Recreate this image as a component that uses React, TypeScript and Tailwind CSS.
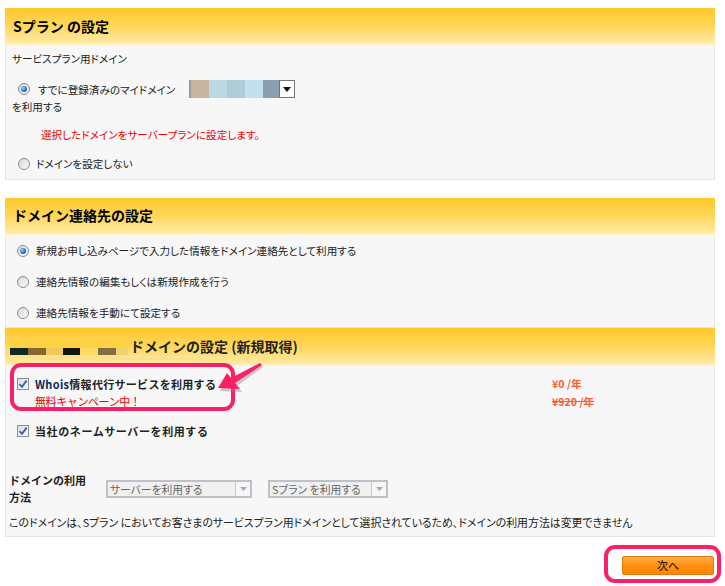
import React from 'react'

const font = '[font-family:"Noto_Sans_CJK_JP","Liberation_Sans",sans-serif]'
const palt = '[font-feature-settings:"palt"]'

function Radio({ checked }: { checked?: boolean }) {
  return (
    <span className="inline-flex items-center justify-center w-[12px] h-[12px] rounded-full border border-[#8c8c8c] bg-gradient-to-br from-[#d8d8d8] to-[#fbfbfb] shrink-0">
      {checked && (
        <span className="block w-[6px] h-[6px] rounded-full bg-[radial-gradient(circle_at_35%_35%,#8fd0ff,#1f6fc4_60%,#0b3f86)]" />
      )}
    </span>
  )
}

function Check() {
  return (
    <span className="inline-flex items-center justify-center w-[12px] h-[12px] border border-[#8f8f99] bg-gradient-to-br from-[#dcdce4] to-[#fafafa] shrink-0">
      <svg width="10" height="10" viewBox="0 0 10 10">
        <path d="M1.5 5.2 L4 7.8 L8.6 1.6" fill="none" stroke="#3a5fa8" strokeWidth="1.8" />
      </svg>
    </span>
  )
}

function Header({ children }: { children: React.ReactNode }) {
  return (
    <div className="h-[37px] flex items-center pl-2 bg-gradient-to-b from-[#ffc928] via-[#ffd656] to-[#ffe9a4] border-b-2 border-[#fff1c6]">
      <span className="text-[14px] font-bold text-black leading-none">{children}</span>
    </div>
  )
}

function Body({ children, className = '' }: { children: React.ReactNode; className?: string }) {
  return (
    <div className={'bg-[#f7f7f7] border border-t-0 border-[#e4e4e4] ' + className}>{children}</div>
  )
}

function DisabledSelect({ label, width }: { label: string; width: string }) {
  return (
    <div className={'h-[18px] flex border-2 border-[#c0c0cc] bg-[#f0f0f0] ' + width}>
      <span className={'flex-1 pl-[2px] text-[10.8px] leading-[14px] text-[#666] ' + palt}>{label}</span>
      <span className="w-[15px] flex items-center justify-center border-l border-[#c8c8d0] bg-[#f6f6f6]">
        <svg width="7" height="4" viewBox="0 0 7 4">
          <path d="M0 0 H7 L3.5 4 Z" fill="#a8a8b0" />
        </svg>
      </span>
    </div>
  )
}

export default function App() {
  return (
    <div className={'relative w-[725px] h-[586px] bg-white text-[#222] ' + font}>
      <div className="ml-[5px] w-[710px] pt-[8px]">
        {/* Sプラン */}
        <Header>Sプラン の設定</Header>
        <Body className={'px-[6px] pt-[6px] pb-[7px] text-[10.6px] ' + palt}>
          <div className="leading-[16px]">サービスプラン用ドメイン</div>
          <div className="mt-[12px] flex items-start">
            <div className="w-[177px] leading-[17px]">
              <span className="inline-flex items-center gap-[8px] pl-[6px]">
                <Radio checked />
                すでに登録済みのマイドメイン
              </span>
              <br />
              を利用する
            </div>
            <div className="mt-[1px] h-[18px] flex border-l-2 border-[#999]">
              <span className="w-[18px] bg-[#c8b4a0]" />
              <span className="w-[18px] bg-[#bcd8e2]" />
              <span className="w-[18px] bg-[#b0ccd6]" />
              <span className="w-[18px] bg-[#c4e0ee]" />
              <span className="w-[16px] bg-[#8aa0b0]" />
              <span className="w-[16px] flex items-center justify-center bg-white border border-[#777]">
                <svg width="8" height="5" viewBox="0 0 8 5">
                  <path d="M0 0 H8 L4 5 Z" fill="#111" />
                </svg>
              </span>
            </div>
          </div>
          <div className="mt-[12px] pl-[29px] leading-[16px] text-[#ee0000]">
            選択したドメインをサーバープランに設定します。
          </div>
          <div className="mt-[13px] pl-[6px] leading-[16px] flex items-center gap-[6px]">
            <Radio />
            ドメインを設定しない
          </div>
        </Body>

        {/* 連絡先 */}
        <div className="mt-[18px]">
          <Header>ドメイン連絡先の設定</Header>
          <Body className={'pl-[11px] pt-[8px] pb-[6px] text-[10.6px] ' + palt}>
            <div className="leading-[16px] flex items-center gap-[7px]">
              <Radio checked />
              新規お申し込みページで入力した情報をドメイン連絡先として利用する
            </div>
            <div className="mt-[15px] leading-[16px] flex items-center gap-[7px]">
              <Radio />
              連絡先情報の編集もしくは新規作成を行う
            </div>
            <div className="mt-[15px] leading-[16px] flex items-center gap-[7px]">
              <Radio />
              連絡先情報を手動にて設定する
            </div>
          </Body>
        </div>

        {/* 新規取得 */}
        <div className="h-[38px] flex items-center pl-[5px] bg-gradient-to-b from-[#ffc928] via-[#ffd656] to-[#ffe9a4] border-b-2 border-[#fff1c6]">
          <div className="w-[118px] h-[19px] flex flex-col">
            <div className="h-[12px] bg-[#ffd144]" />
            <div className="h-[7px] flex">
              <span className="w-[18px] bg-[#0f2a25]" />
              <span className="w-[18px] bg-[#85682f]" />
              <span className="w-[17px] bg-[#f0c860]" />
              <span className="w-[17px] bg-[#10160f]" />
              <span className="w-[18px] bg-[#ffd868]" />
              <span className="w-[18px] bg-[#807040]" />
              <span className="w-[12px] bg-[#f0d070]" />
            </div>
          </div>
          <span className="ml-[2px] text-[14px] font-bold leading-none">ドメインの設定 (新規取得)</span>
        </div>
        <Body className="pt-[10px] pb-[6px] text-[11px]">
          <div className="flex">
            <div className="w-[546px] pl-[11px]">
              <div className="leading-[17px] flex items-center gap-[6px] font-bold tracking-[0.3px]">
                <Check />
                <span><span className="text-[#0a2a5a]">Whois</span>情報代行サービスを利用する</span>
              </div>
              <div className="pl-[18px] leading-[17px] text-[#ee0000] tracking-[-0.4px]">無料キャンペーン中！</div>
            </div>
            <div className="font-bold text-[#ff5c2e] leading-[18px] -mt-[1px] text-[10.6px]">
              <div>¥0 /年</div>
              <div className="line-through">¥920 /年</div>
            </div>
          </div>
          <div className="mt-[12px] pl-[11px] leading-[16px] flex items-center gap-[6px] font-bold tracking-[0.6px]">
            <Check />
            当社のネームサーバーを利用する
          </div>
          <div className="mt-[33px] flex items-start pl-[3px]">
            <div className="w-[97px] font-bold leading-[17px]">
              ドメインの利用
              <br />
              方法
            </div>
            <div className="mt-[8px] flex gap-[16px]">
              <DisabledSelect label="サーバーを利用する" width="w-[146px]" />
              <DisabledSelect label="Sプラン を利用する" width="w-[120px]" />
            </div>
          </div>
          <div className={'mt-[8px] pl-[3px] leading-[16px] whitespace-nowrap text-[10.9px] ' + palt}>
            このドメインは、Sプラン においてお客さまのサービスプラン用ドメインとして選択されているため､ドメインの利用方法は変更できません
          </div>
        </Body>

        <div className="mt-[19px] flex justify-end pr-[1px]">
          <button
            type="button"
            className="w-[92px] h-[19px] text-[11px] leading-none text-black bg-gradient-to-b from-[#ffb040] via-[#ff9010] to-[#ff8400] border border-[#e07a10] rounded-[2px]"
          >
            次へ
          </button>
        </div>
      </div>

      {/* annotations */}
      <div className="absolute left-[10px] top-[363px] w-[225px] h-[48px] border-[4px] border-[#fb1f66] rounded-[11px] pointer-events-none" />
      <div className="absolute left-[604px] top-[545px] w-[117px] h-[38px] border-[4px] border-[#fb1f66] rounded-[11px] pointer-events-none" />
      <svg className="absolute left-0 top-0 pointer-events-none" width="725" height="586" viewBox="0 0 725 586">
        <path d="M220 391 L229 376 L233 381 L261 365 L263 367 L237 386 L242 392 Z" fill="#8a8a8a" opacity="0.45" />
        <path d="M218 388 L227 373 L231 378 L260 363 L262 365 L235 383 L240 389 Z" fill="#fb1f66" />
      </svg>
    </div>
  )
}
